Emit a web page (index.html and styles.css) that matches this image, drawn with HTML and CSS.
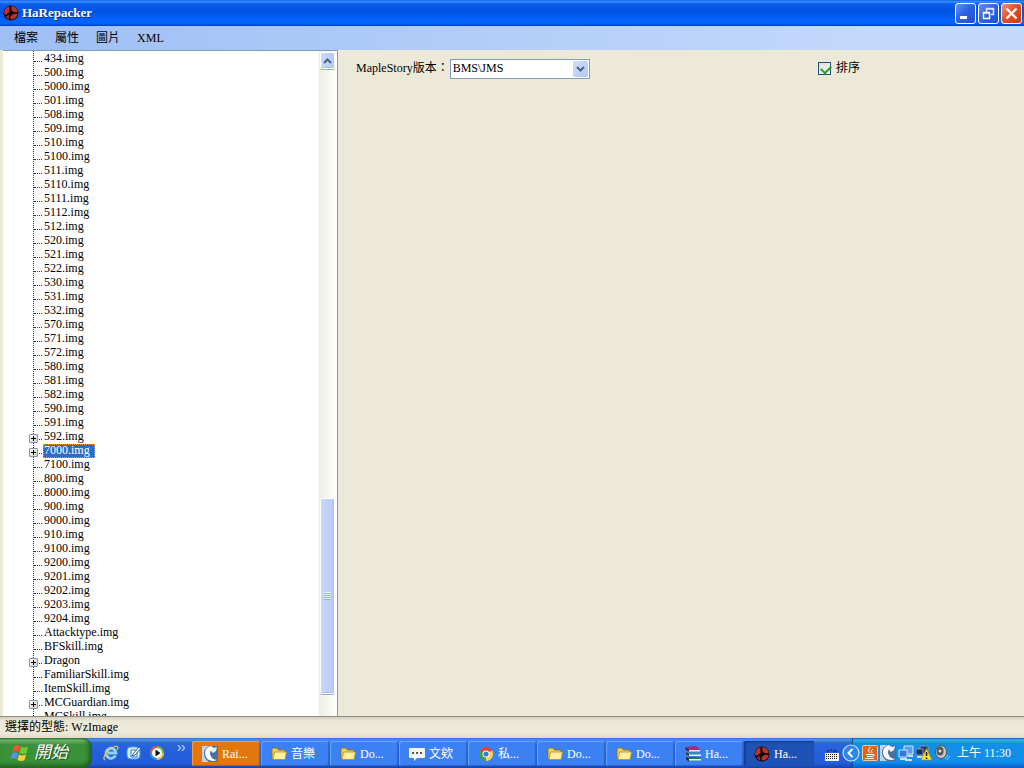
FILE: index.html
```html
<!DOCTYPE html>
<html lang="zh-Hant">
<head>
<meta charset="utf-8">
<title>HaRepacker</title>
<link rel="stylesheet" href="styles.css">
</head>
<body>
<svg class="defs" aria-hidden="true">
  <symbol id="ha" viewBox="0 0 16 16">
    <circle cx="8" cy="8" r="7.500" fill="#170707"/>
    <path d="M6.500 1.200C3 2 1 4.600 1 8l1.500 2.200L6.500 7z" fill="#b8342f"/>
    <path d="M8.200 1c3.500.2 6 2.500 6.600 5.600L12 7.800 8.500 5.500z" fill="#a73a35"/>
    <path d="M14.600 9c-.6 3-3 5.500-6.400 5.600L7 12l3.500-3.200z" fill="#b8342f"/>
    <path d="M2.500 11.500C3.500 13.300 5 14.300 6.500 14.500L5.800 11.500 6.500 9z" fill="#932c28"/>
    <path d="M7.500 1.500v6l-5 3.500M7.500 7.500l6 .8M7.500 7.500L6.500 13" fill="none" stroke="#170707" stroke-width="1.200"/>
  </symbol>
  <symbol id="folder" viewBox="0 0 16 16">
    <path d="M1 3.500Q1 2 2.500 2H6l1.500 2H13q1 0 1 1v8H2.500Q1 13 1 12z" fill="#f0cf58" stroke="#8a6a10" stroke-width=".8"/>
    <path d="M3.500 6H15.500L14 13.500H2z" fill="#fff0a0" stroke="#b58e22" stroke-width=".8"/>
  </symbol>
  <symbol id="rai" viewBox="0 0 16 16">
    <path d="M0 0h16v16H0z" fill="#4a6fa5"/>
    <path d="M0 0h8Q2 2 2 7q0 6 5 9H0z" fill="#c3d3e6"/>
    <path d="M9 0Q3 2 3 7q0 7 8 8 2 0 4-1-5-1-6-3.500Q7 7 9 4z" fill="#fff"/>
    <path d="M9 0l3 2 3-1-1 4-3 2-2-2z" fill="#e9f1fa"/>
  </symbol>
</svg>

<header class="titlebar">
  <svg class="icon"><use href="#ha"/></svg>
  <h1>HaRepacker</h1>
  <div class="window-buttons">
    <button class="win" aria-label="最小化"><svg viewBox="0 0 19 19"><path d="M4 12h7v3H4z" fill="#fff"/></svg></button>
    <button class="win" aria-label="還原"><svg viewBox="0 0 19 19"><path d="M7.500 8V4.500h7v6H12M7 5h8" fill="none" stroke="#dce7ff" stroke-width="1.500"/><path d="M4.500 8.500h6v6h-6zM4 9h7" fill="none" stroke="#fff" stroke-width="1.500"/></svg></button>
    <button class="win close" aria-label="關閉"><svg viewBox="0 0 19 19"><path d="M4.500 4.500l10 10M14.500 4.500l-10 10" stroke="#fff" stroke-width="2.400"/></svg></button>
  </div>
</header>

<nav class="menubar">
  <button>檔案</button><button>屬性</button><button>圖片</button><button>XML</button>
</nav>

<main class="workspace">
  <aside class="tree-panel">
    <ul class="tree">
      <li><span>434.img</span></li>
      <li><span>500.img</span></li>
      <li><span>5000.img</span></li>
      <li><span>501.img</span></li>
      <li><span>508.img</span></li>
      <li><span>509.img</span></li>
      <li><span>510.img</span></li>
      <li><span>5100.img</span></li>
      <li><span>511.img</span></li>
      <li><span>5110.img</span></li>
      <li><span>5111.img</span></li>
      <li><span>5112.img</span></li>
      <li><span>512.img</span></li>
      <li><span>520.img</span></li>
      <li><span>521.img</span></li>
      <li><span>522.img</span></li>
      <li><span>530.img</span></li>
      <li><span>531.img</span></li>
      <li><span>532.img</span></li>
      <li><span>570.img</span></li>
      <li><span>571.img</span></li>
      <li><span>572.img</span></li>
      <li><span>580.img</span></li>
      <li><span>581.img</span></li>
      <li><span>582.img</span></li>
      <li><span>590.img</span></li>
      <li><span>591.img</span></li>
      <li><button class="expander" aria-label="展開 592.img"></button><span>592.img</span></li>
      <li><button class="expander" aria-label="展開 7000.img"></button><span class="selected">7000.img</span></li>
      <li><span>7100.img</span></li>
      <li><span>800.img</span></li>
      <li><span>8000.img</span></li>
      <li><span>900.img</span></li>
      <li><span>9000.img</span></li>
      <li><span>910.img</span></li>
      <li><span>9100.img</span></li>
      <li><span>9200.img</span></li>
      <li><span>9201.img</span></li>
      <li><span>9202.img</span></li>
      <li><span>9203.img</span></li>
      <li><span>9204.img</span></li>
      <li><span>Attacktype.img</span></li>
      <li><span>BFSkill.img</span></li>
      <li><button class="expander" aria-label="展開 Dragon"></button><span>Dragon</span></li>
      <li><span>FamiliarSkill.img</span></li>
      <li><span>ItemSkill.img</span></li>
      <li><button class="expander" aria-label="展開 MCGuardian.img"></button><span>MCGuardian.img</span></li>
      <li><span>MCSkill.img</span></li>
    </ul>
    <div class="scrollbar">
      <button class="scroll-up" aria-label="向上捲動"><svg viewBox="0 0 9 6"><path d="M1 5l3.500-3.500L8 5" fill="none" stroke="#4d6185" stroke-width="2"/></svg></button>
      <div class="track-before"></div>
      <div class="thumb"><i class="grip"></i></div>
      <div class="track-after"></div>
    </div>
  </aside>

  <section class="details">
    <div class="field">
      <label for="version">MapleStory版本：</label>
      <span class="combo">
        <select id="version"><option>BMS\JMS</option></select>
        <span class="combo-arrow"><svg viewBox="0 0 9 6"><path d="M1 1l3.500 3.500L8 1" fill="none" stroke="#4d6185" stroke-width="2"/></svg></span>
      </span>
    </div>
    <label class="check"><input type="checkbox" checked>排序</label>
  </section>
</main>

<footer class="statusbar">選擇的型態: WzImage</footer>

<div class="taskbar">
  <button class="start">
    <svg viewBox="0 0 20 20">
      <path d="M4 3q3-2 6 0L8.500 9q-3-2-6 0z" fill="#f0562a"/>
      <path d="M11 3.500q3 2 7 0L16.500 10q-3 2-7 0z" fill="#7ac62e"/>
      <path d="M2 10.500q3-2 6 0L6.500 16q-3-2-6 0z" fill="#5a8ef0"/>
      <path d="M9 11.500q3 2 7 0L14.500 17q-3 2-7 0z" fill="#fbd030"/>
    </svg>開始
  </button>
  <div class="quick">
    <button aria-label="Internet Explorer"><svg viewBox="0 0 16 16"><path d="M12.500 10.500A5 5 0 1 1 13 8H5" fill="none" stroke="#8fd3ff" stroke-width="2.800"/><path d="M2 15C-2 13 6 3 12 1.500c4-.8 3 2 2 3" fill="none" stroke="#f3c84c" stroke-width="1.200"/></svg></button>
    <button aria-label="顯示桌面"><svg viewBox="0 0 16 16"><rect x="1" y="2" width="13" height="12" rx="4" fill="#d9efff" stroke="#3fa1e8"/><path d="M5 5h6v7H5z" fill="#fff" stroke="#2674bd"/><path d="M7 9l6-7 2 1-6 7-3 1z" fill="#fff" stroke="#1d64ac"/></svg></button>
    <button aria-label="媒體播放器"><svg viewBox="0 0 16 16"><circle cx="8" cy="8" r="7" fill="#3f8fe0"/><path d="M8 8V1a7 7 0 0 0-7 7z" fill="#e8592a"/><path d="M8 8h7a7 7 0 0 0-7-7z" fill="#76b83d"/><path d="M8 8v7a7 7 0 0 0 7-7z" fill="#f6bd34"/><circle cx="8" cy="8" r="5" fill="#fff"/><path d="M6.500 4.500L11.500 8l-5 3.500z" fill="#111"/></svg></button>
    <button class="more" aria-label="更多"><svg viewBox="0 0 8 6"><path d="M1 0l2.500 3L1 6M5 0l2.500 3L5 6" fill="none" stroke="#a9cbff" stroke-width="1.300"/></svg></button>
  </div>
  <div class="tasks">
    <button class="task alert"><svg class="icon"><use href="#rai"/></svg>Rai...</button>
    <button class="task"><svg class="icon"><use href="#folder"/></svg>音樂</button>
    <button class="task"><svg class="icon"><use href="#folder"/></svg>Do...</button>
    <button class="task"><svg class="icon" viewBox="0 0 16 16"><path d="M1 2h14q1 0 1 1v8q0 1-1 1H8l-3 3v-3H1q-1 0-1-1V3q0-1 1-1z" fill="#f4f4f4"/><path d="M3 6h2v2H3zM7 6h2v2H7zM11 6h2v2h-2z" fill="#555"/></svg>文欸</button>
    <button class="task"><svg class="icon" viewBox="0 0 16 16"><path d="M8 8L1.900 4.500A7 7 0 0 1 14.100 4.500z" fill="#df4335"/><path d="M8 8l6.100-3.500A7 7 0 0 1 8 15z" fill="#fbd34b"/><path d="M8 8v7A7 7 0 0 1 1.900 4.500z" fill="#3f9f4a"/><circle cx="8" cy="8" r="3.500" fill="#fff"/><circle cx="8" cy="8" r="2.600" fill="#3b7bd6"/></svg>私...</button>
    <button class="task"><svg class="icon"><use href="#folder"/></svg>Do...</button>
    <button class="task"><svg class="icon"><use href="#folder"/></svg>Do...</button>
    <button class="task"><svg class="icon" viewBox="0 0 16 16"><path d="M0 1l11-1 4 3v2H4z" fill="#a02c7e"/><path d="M4 4h11v1.500H4z" fill="#f2e6ee"/><path d="M1 6h11l4 2v1.500H4L1 8z" fill="#2f8fa8"/><path d="M4 8.500h12V10H4z" fill="#e8f0ff"/><path d="M1 11h11l4 1v2.500H4l-3-2z" fill="#167a50"/><path d="M4 13h12v1.500H4z" fill="#eafbe9"/><path d="M0 1l4 3v1.500L1 4zM1 6l3 2.500V10L1 8zM1 11l3 2v2.500l-3-2z" fill="#3a2030"/></svg>Ha...</button>
    <button class="task active"><svg class="icon"><use href="#ha"/></svg>Ha...</button>
  </div>
  <button class="keyboard" aria-label="輸入法"><svg viewBox="0 0 14 12"><path d="M2 2h2M5 1h2M8 2h2M10 1l2 2" stroke="#0d1d44"/><path d="M0 4h14v8H0z" fill="#f4f4f4"/><path d="M1 5.500h12M1 7.500h12M1 9.500h12" stroke="#111" stroke-dasharray="1 1"/></svg></button>
  <div class="tray">
    <button class="collapse" aria-label="隱藏圖示"><svg viewBox="0 0 18 18"><circle cx="9" cy="9" r="8" fill="#2d86e8" stroke="#c9e5ff" stroke-width="1.200"/><path d="M10.500 5l-4 4 4 4" fill="none" stroke="#fff" stroke-width="2"/></svg></button>
    <svg class="icon" viewBox="0 0 16 16"><rect x="0.500" y="0.500" width="15" height="15" rx="1" fill="#e0641a" stroke="#f7c69b"/><path d="M8.500 2Q5 5 8 8M11 4q-3 2-1 4M4 9.500h7M5 11.500h6M3 13.500h9M11 9.500q3 0 0 2" fill="none" stroke="#fff"/></svg>
    <svg class="icon"><use href="#rai"/></svg>
    <svg class="icon" viewBox="0 0 16 16"><path d="M6 1h9v8H6z" fill="#5b9bf0" stroke="#d5e6ff"/><path d="M1 5h8v7H1z" fill="#3578dd" stroke="#d5e6ff"/><path d="M2 14h7M10 11h5M7 15h7" stroke="#d6dce8" stroke-width="2"/></svg>
    <svg class="icon" viewBox="0 0 16 16"><path d="M4 1h8v7H4z" fill="#243963" stroke="#8595b9"/><path d="M0 4h7v6H0z" fill="#192f5a" stroke="#8595b9"/><path d="M1 12h6" stroke="#ccd3e0" stroke-width="2"/><path d="M10.500 3.500L16 15H5z" fill="#ffe71b" stroke="#a78600" stroke-width=".7"/><path d="M10.500 7v4M10.500 12.500V14" stroke="#111" stroke-width="1.500"/></svg>
    <svg class="icon" viewBox="0 0 16 16"><ellipse cx="7" cy="7" rx="5.500" ry="6.500" fill="#c8c8c8" stroke="#555"/><ellipse cx="6" cy="6" rx="3.500" ry="4.500" fill="#555"/><circle cx="6" cy="6" r="1.500" fill="#ddd"/><path d="M11 14l3-4M13 15l3-4" stroke="#8fc6ff"/></svg>
    <time>上午 11:30</time>
  </div>
</div>
</body>
</html>
```
FILE: styles.css
```css
* { box-sizing: border-box; }

body {
  margin: 0;
  height: 100vh;
  display: flex;
  flex-direction: column;
  overflow: hidden;
  background: #ece9d8;
  color: #000;
  font: 12px/14px "Liberation Serif", "Noto Sans CJK TC", serif;
}

button, select, input { font: inherit; color: inherit; margin: 0; padding: 0; }
button { border: 0; background: none; }
svg { display: block; flex: none; }
.defs { position: absolute; width: 0; height: 0; }
.icon { width: 16px; height: 16px; }

/* Title bar */
.titlebar {
  flex: none;
  height: 26px;
  display: flex;
  align-items: center;
  gap: 3px;
  padding: 0 2px 0 3px;
  background: linear-gradient(#0a5fe8 0, #3a8cff 6%, #0a5de8 16%, #0054e3 45%, #0262fa 75%, #0066ff 88%, #0042c4 100%);
}
.titlebar h1 {
  flex: 1;
  margin: 0;
  font-size: 13px;
  line-height: 16px;
  color: #fff;
  text-shadow: 1px 1px 0 #0a2d86;
}
.window-buttons { display: flex; gap: 2px; }
.win {
  width: 21px;
  height: 21px;
  border: 1px solid #fff;
  border-radius: 3px;
  background: linear-gradient(135deg, #6a93f4, #2f62e4 45%, #1f4fd2);
}
.win.close { background: linear-gradient(135deg, #f0947c, #e2532b 45%, #c93a12); }
.win svg { width: 19px; height: 19px; }

/* Menu */
.menubar {
  flex: none;
  height: 24px;
  display: flex;
  align-items: center;
  gap: 17px;
  padding-left: 14px;
  background: linear-gradient(90deg, #9ebef5, #c3d9fb 85%);
}

/* Workspace */
.workspace { flex: 1; min-height: 0; display: flex; padding-left: 3px; }
.tree-panel {
  flex: none;
  width: 335px;
  display: flex;
  overflow: hidden;
  background: #fff;
  border-top: 1px solid #7f9db9;
  border-right: 1px solid #7f9db9;
}
.tree {
  flex: 1;
  align-self: flex-start;
  list-style: none;
  margin: 0 0 0 30px;
  padding: 1px 0 0;
  border-left: 1px dotted #333;
}
.tree li { position: relative; display: flex; height: 14px; }
.tree li::before {
  content: "";
  width: 8px;
  height: 9px;
  margin-right: 1px;
  border-bottom: 1px dotted #333;
}
.tree span { padding: 0 1px; height: 14px; line-height: 13px; white-space: nowrap; }
.tree .selected {
  padding-right: 5px;
  color: #fff;
  background: #316ac5;
  outline: 1px dotted #e79a31;
  outline-offset: -1px;
}
.expander {
  position: absolute;
  left: -5px;
  top: 4px;
  width: 9px;
  height: 9px;
  border: 1px solid #7898b5;
  border-radius: 1px;
  background:
    linear-gradient(#000, #000) center / 5px 1px no-repeat,
    linear-gradient(#000, #000) center / 1px 5px no-repeat,
    linear-gradient(135deg, #fff, #d2cdbe);
}

.scrollbar {
  flex: none;
  width: 17px;
  margin-right: 1px;
  padding: 1px 1px 0;
  display: flex;
  flex-direction: column;
  background: linear-gradient(90deg, #eeede5, #fefefb);
}
.scroll-up, .thumb {
  border: 1px solid #fff;
  border-radius: 2px;
  background: linear-gradient(90deg, #c9d8fc, #b7cbf9);
  box-shadow: 0 1px 0 #90aee0, inset -1px -1px 0 #a9c0f3;
  display: flex;
  align-items: center;
  justify-content: center;
}
.scroll-up { height: 17px; flex: none; }
.scroll-up svg, .combo-arrow svg { width: 9px; height: 6px; }
.track-before { flex: 430; }
.thumb { flex: 195; }
.track-after { flex: 22; }
.grip {
  width: 7px;
  height: 8px;
  background: repeating-linear-gradient(#eef4fe 0 1px, #8cb0f8 1px 2px);
}

.details { flex: 1; display: flex; align-items: flex-start; padding: 8px 164px 0 18px; justify-content: space-between; }
.field { display: flex; align-items: flex-start; gap: 1px; }
.field label { padding-top: 3px; }
.combo { position: relative; display: block; margin-top: 1px; }
.combo select {
  display: block;
  width: 140px;
  height: 20px;
  padding: 0 20px 2px 2px;
  border: 1px solid #7f9db9;
  border-radius: 0;
  background: #fff;
  appearance: none;
}
.combo-arrow {
  position: absolute;
  top: 2px;
  right: 2px;
  width: 15px;
  height: 16px;
  display: flex;
  align-items: center;
  justify-content: center;
  border-radius: 1px;
  background: linear-gradient(135deg, #d0defd, #b1c8f6);
  pointer-events: none;
}
.check { display: flex; align-items: center; gap: 5px; padding-top: 3px; }
.check input {
  appearance: none;
  width: 13px;
  height: 13px;
  border: 1px solid #1c5180;
  background: linear-gradient(135deg, #dcdcd7, #fff);
}
.check input:checked::before {
  content: "";
  display: block;
  width: 8px;
  height: 5px;
  margin: 2px 0 0 2px;
  border: solid #21a121;
  border-width: 0 0 2px 2px;
  transform: rotate(-45deg);
}

/* Status */
.statusbar {
  flex: none;
  height: 22px;
  padding: 3px 5px 0;
  border-top: 1px solid #8f8d80;
  background: linear-gradient(#d2cfbe, #ece9d8 20%, #ece9d8 75%, #dedbc9);
}

/* Taskbar */
.taskbar {
  flex: none;
  height: 30px;
  display: flex;
  align-items: stretch;
  color: #fff;
  background: linear-gradient(#3168d5 0, #4993e6 6%, #2b66dd 16%, #245edb 50%, #245ddb 85%, #1941a5 100%);
}
.start {
  flex: none;
  width: 92px;
  display: flex;
  align-items: center;
  gap: 4px;
  padding-left: 10px;
  border-radius: 0 9px 9px 0;
  background: linear-gradient(#388238 0, #6fb56f 8%, #3c8f3c 22%, #389338 75%, #2c6f2c 100%);
  box-shadow: inset -3px -1px 4px #1f5e1f;
  font-size: 17px;
  font-style: italic;
  line-height: 20px;
  text-shadow: 1px 1px 1px #1c431c;
}
.start svg { width: 20px; height: 20px; }
.quick { flex: none; display: flex; align-items: center; gap: 7px; width: 100px; padding-left: 11px; }
.quick svg { width: 16px; height: 16px; }
.quick .more { padding: 0 0 10px 5px; }
.quick .more svg { width: 8px; height: 6px; }
.tasks { flex: 1; display: flex; gap: 1px; padding: 3px 0 2px; min-width: 0; }
.task {
  flex: 0 1 68px;
  min-width: 0;
  display: flex;
  align-items: center;
  gap: 4px;
  padding-left: 10px;
  border-radius: 2px;
  background: #3c81f3;
  box-shadow: inset 1px 1px 1px #6ba5fa, inset -1px -1px 1px #2a63cf;
  white-space: nowrap;
}
.task.alert { background: #e2780c; box-shadow: inset 1px 1px 1px #f3a04c, inset -1px -1px 1px #b95e05; }
.task.active { flex-basis: 70px; background: #1e52b7; box-shadow: inset 1px 1px 2px #12357f; }
.keyboard { flex: none; width: 27px; padding-top: 3px; }
.keyboard svg { width: 14px; height: 12px; }
.tray {
  flex: none;
  width: 172px;
  display: flex;
  align-items: center;
  gap: 2px;
  border-left: 1px solid #0f4fa8;
  background: linear-gradient(#0c59b9 0, #34b0f1 6%, #1290e8 18%, #118eea 80%, #0a5bc6 100%);
}
.tray .collapse { margin-left: -11px; }
.collapse svg { width: 18px; height: 18px; }
.tray time { margin-left: 5px; white-space: nowrap; }
```
